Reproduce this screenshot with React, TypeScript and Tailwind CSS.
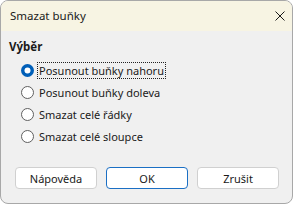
import React from "react";

const font = { fontFamily: '"Noto Sans", "Open Sans", sans-serif' };

function Radio({ checked }: { checked?: boolean }) {
  if (checked) {
    return (
      <svg width="13" height="13" viewBox="0 0 13 13" className="shrink-0">
        <circle cx="6.5" cy="6.5" r="6.5" fill="#005fb8" />
        <circle cx="6.5" cy="6.5" r="3" fill="#ffffff" />
      </svg>
    );
  }
  return (
    <svg width="13" height="13" viewBox="0 0 13 13" className="shrink-0">
      <circle cx="6.5" cy="6.5" r="6" fill="#ffffff" stroke="#5f5f5f" strokeWidth="1" />
    </svg>
  );
}

const options = [
  "Posunout buňky nahoru",
  "Posunout buňky doleva",
  "Smazat celé řádky",
  "Smazat celé sloupce",
];

export default function App() {
  return (
    <div className="w-[294px] h-[204px] bg-white" style={font}>
      <div className="w-[293px] h-[204px] border border-[#a8a8a8] rounded-[8px] overflow-hidden bg-[#f0f0f0] flex flex-col text-[11px] text-[#1a1a1a]">
        <div className="h-[30px] bg-[#f7f4e3] flex items-center justify-between pl-[9px] pr-[6px] shrink-0">
          <span className="text-[11.5px] leading-none">Smazat buňky</span>
          <svg width="10" height="10" viewBox="0 0 10 10" className="mr-[1px]">
            <path d="M0.5 0.5 L9.5 9.5 M9.5 0.5 L0.5 9.5" stroke="#1a1a1a" strokeWidth="1" />
          </svg>
        </div>
        <div className="pl-[8px] pt-[9px] font-bold text-[11.5px] leading-[14px]">Výběr</div>
        <div className="flex flex-col pl-[20px] pt-[5px]">
          {options.map((o, i) => (
            <div key={o} className="flex items-center h-[22px] gap-[3px]">
              <Radio checked={i === 0} />
              <span
                className={
                  "leading-[15px] px-[1px] " +
                  (i === 0 ? "border border-dotted border-[#222]" : "border border-transparent")
                }
              >
                {o}
              </span>
            </div>
          ))}
        </div>
        <div className="flex gap-[9px] pl-[14px] mt-[20px]">
          <button className="w-[82px] h-[22px] rounded-[4px] bg-white border border-[#d0d0d0] text-[11px] leading-none">
            Nápověda
          </button>
          <button className="w-[82px] h-[22px] rounded-[4px] bg-white border border-[#1b6fc4] text-[11px] leading-none">
            OK
          </button>
          <button className="w-[82px] h-[22px] rounded-[4px] bg-white border border-[#d0d0d0] text-[11px] leading-none">
            Zrušit
          </button>
        </div>
      </div>
    </div>
  );
}
